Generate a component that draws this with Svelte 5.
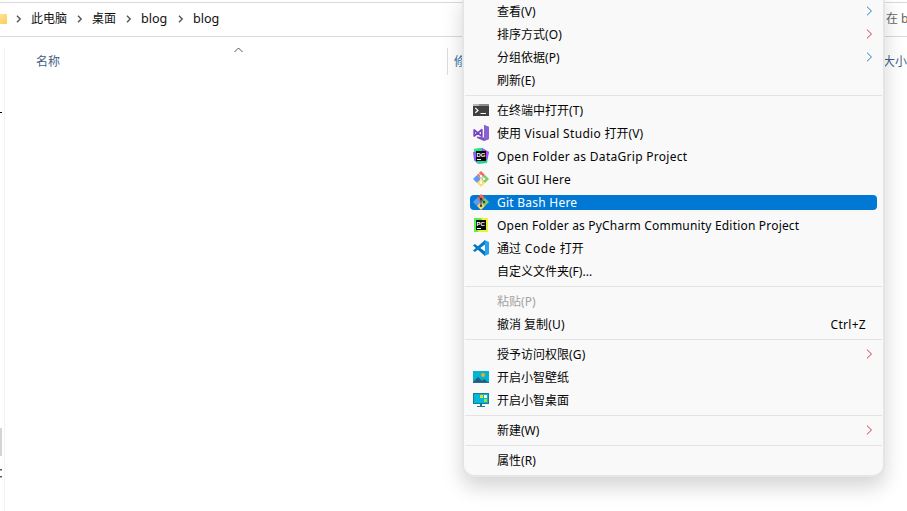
<script>
  const groups = [
    [
      { parts: [['查看'], ['(V)', 0.1]], arrow: 'blue' },
      { parts: [['排序方式'], ['(O)', 0.1]], arrow: 'red' },
      { parts: [['分组依据'], ['(P)', 0.1]], arrow: 'blue' },
      { parts: [['刷新'], ['(E)', 0.1]] }
    ],
    [
      { parts: [['在终端中打开'], ['(T)', 0.1]], icon: 'terminal' },
      { parts: [['使用'], [' Visual Studio ', 0.32], ['打开'], ['(V)', 0.1]], icon: 'vs' },
      { parts: [['Open Folder as DataGrip Project', 0.29]], icon: 'datagrip' },
      { parts: [['Git GUI Here', 0.24]], icon: 'git' },
      { parts: [['Git Bash Here', 0.24]], icon: 'git', selected: true },
      { parts: [['Open Folder as PyCharm Community Edition Project', 0.19]], icon: 'pycharm' },
      { parts: [['通过'], [' Code ', 0.6], ['打开']], icon: 'code' },
      { parts: [['自定义文件夹'], ['(F)...', 0]] }
    ],
    [
      { parts: [['粘贴'], ['(P)', 0.1]], disabled: true },
      { parts: [['撤消 复制'], ['(U)', 0.3]], shortcut: 'Ctrl+Z' }
    ],
    [
      { parts: [['授予访问权限'], ['(G)', 0.2]], arrow: 'red' },
      { parts: [['开启小智壁纸']], icon: 'wallpaper' },
      { parts: [['开启小智桌面']], icon: 'desktop' }
    ],
    [{ parts: [['新建'], ['(W)', 0]], arrow: 'red' }],
    [{ parts: [['属性'], ['(R)', 0.1]] }]
  ];
  const crumbs = ['此电脑', '桌面', 'blog', 'blog'];
</script>

<div class="window">
  <header class="address">
    <i class="folder"></i>
    {#each crumbs as crumb, i}
      <svg class="sep" width="6" height="8" viewBox="0 0 6 8"><path d="M1 .8 4.2 4 1 7.2" fill="none" stroke="#555" stroke-width="1.4" /></svg>
      <span class="crumb c{i}">{crumb}</span>
    {/each}
    <span class="search">在 b</span>
  </header>
  <main>
    <aside>
      <i class="dash"></i>
      <i class="thumb"></i>
      <span class="bits"><i></i><i></i></span>
    </aside>
    <section>
      <div class="columns">
        <div class="name">名称
          <svg class="sort" width="9" height="6" viewBox="0 0 9 6"><path d="M.5 5 4.5 1 8.5 5" fill="none" stroke="#555" /></svg>
        </div>
        <div class="date">修</div>
        <div class="size">大小</div>
      </div>
    </section>
  </main>

  <nav class="menu">
    {#each groups as group, g}
      {#if g}<hr />{/if}
      {#each group as item}
        <div class="row" class:selected={item.selected} class:disabled={item.disabled}>
          <span class="icon">
            {#if item.icon === 'terminal'}
              <svg viewBox="0 0 16 16"><path d="M0 2h16v12H0z" fill="#414141" /><path d="M0 2h16v2H0z" fill="#8c8c8c" /><path d="M0 2h6v2H0z" fill="#b8b8b8" /><path d="m2.3 6 2.7 2.4-2.7 2.4M7.5 11.5H13" fill="none" stroke="#fff" stroke-width="1.2" /></svg>
            {:else if item.icon === 'vs'}
              <svg viewBox="0 0 16 16"><path d="m11 0 5 2v12l-5 2-7-3v-1.4l7 1z" fill="#7b4fc4" /><path d="m11 0 5 2v12l-5 2z" fill="#8962d2" /><path d="M1.2 5v6L8.8 4.7v6.6L1.2 5z" fill="none" stroke="#7543bf" stroke-width="1.7" stroke-linejoin="round" /></svg>
            {:else if item.icon === 'datagrip'}
              <svg viewBox="0 0 16 16"><path d="m1 1 8-1 7 4-2 11-9 1-4-4z" fill="#20d6a0" /><path d="m9 0 7 4-2 8-6-3z" fill="#a64bf5" /><path d="m0 4 4-1v12l-3-3z" fill="#8c5cf1" /><path d="m1 1 8-1-4 4H1z" fill="#1ce883" /><path d="M3 3h10v10H3z" fill="#070707" /><text x="3.4" y="8.5" class="badge">DG</text><path d="M4 11h4v1H4z" fill="#fff" /></svg>
            {:else if item.icon === 'git'}
              <svg viewBox="0 0 16 16"><path d="m8 0 4 4-4 4-4-4z" fill="#f06b60" /><path d="m4 4 4 4-4 4-4-4z" fill="#6499ef" /><path d="m12 4 4 4-4 4-4-4z" fill="#80cc69" /><path d="m8 8 4 4-4 4-4-4z" fill="#ffda65" />
                <g class="branch"><path d="m5.5 2.2 5.2 5.3M8 4.7v7" /><path d="M7.3 4.3h1.4v1.4H7.3zM7.3 11h1.4v1.4H7.3zM10.3 7.3h1.4v1.4h-1.4z" /></g>
              </svg>
            {:else if item.icon === 'pycharm'}
              <svg viewBox="0 0 16 16"><path d="M1 1h14v14H1z" fill="#e6f532" /><path d="M1 1h8L5 15H1z" fill="#63ed4c" /><path d="M8 1h7v5z" fill="#ffed35" /><path d="M3 3h10v10H3z" fill="#080b05" /><text x="3.6" y="8.5" class="badge">PC</text><path d="M4 11h4v1H4z" fill="#fff" /></svg>
            {:else if item.icon === 'code'}
              <svg viewBox="0 0 16 16"><path d="m0 5.5 1.8-1.4L12 11.5V16z" fill="#0872b9" /><path d="m0 10.5 1.8 1.4L12 4.5V0z" fill="#087dc7" /><path d="m11.5 0 4.5 2v12l-4.5 2-.8-.8c.8.2 1.3-.2 1.3-1V1.8c0-.8-.5-1.2-1.3-1z" fill="#24a3ed" /></svg>
            {:else if item.icon === 'wallpaper'}
              <svg viewBox="0 0 16 16"><path d="M0 2h16v12H0z" fill="#00b4d2" /><path d="m0 13 5-5 4 4 2-2 5 4H0z" fill="#245b82" /><circle cx="10" cy="6" r="2" fill="#f3ac16" /><path d="M0 13h16v1H0z" fill="#246e91" /></svg>
            {:else if item.icon === 'desktop'}
              <svg viewBox="0 0 16 16"><path d="M0 1h16v11H0z" fill="#187b9c" /><path d="M1 2h14v9H1z" fill="#00b8d7" /><path d="M7 3h3v3H7z" fill="#ffd51a" /><path d="M11 3h3v3h-3z" fill="#fff" /><path d="M11 7h3v3h-3z" fill="#a7df21" /><path d="M7 12h2v2h3v1H4v-1h3z" fill="#187b9c" /></svg>
            {/if}
          </span>
          <span class="label">{#each item.parts as [text, spacing]}<span style:letter-spacing="{spacing ?? 0}px">{text}</span>{/each}</span>
          {#if item.shortcut}<span class="shortcut">{item.shortcut}</span>{/if}
          {#if item.arrow}
            <svg class="arrow {item.arrow}" width="7" height="10" viewBox="0 0 7 10"><path d="m1 .7 4.5 4.3L1 9.3" fill="none" stroke="currentColor" /></svg>
          {/if}
        </div>
      {/each}
    {/each}
  </nav>
</div>

<style>
  :global(body) { background: #fff; }
  .window { position: relative; display: flex; flex-direction: column; width: 907px; height: 511px; overflow: hidden; background: #fff; color: #111; font: 12px/23px "Noto Sans", "Noto Sans CJK SC", sans-serif; white-space: nowrap; }
  .address { box-sizing: border-box; display: flex; align-items: center; flex: none; height: 35px; margin-top: 2px; padding-bottom: 2px; border: solid #d9d9d9; border-width: 1px 0; }
  .folder { width: 7px; height: 10px; flex: none; border-radius: 0 1px 1px 0; background: linear-gradient(135deg, #ffe397, #ffcc51); }
  .sep { flex: none; margin: 0 9px 0 9px; }
  .crumb { flex: none; width: 36px; }
  .c0 { width: 37px; }
  .c1 { width: 25px; }
  .c2, .c3 { width: 28px; font-size: 12.6px; }
  .search { margin-left: auto; width: 21px; white-space: pre; color: #666; }
  main { display: flex; flex: 1; min-height: 0; padding-top: 11px; }
  aside { box-sizing: border-box; display: flex; flex-direction: column; width: 5px; border-right: 1px solid #f2f2f2; }
  .dash { width: 2px; height: 1px; margin-top: 64px; background: #000; }
  .thumb { width: 2px; height: 28px; margin-top: 315px; background: #d5d5d5; }
  .bits { display: flex; flex-direction: column; gap: 5px; margin-top: 13px; }
  .bits i { width: 2px; height: 2px; background: linear-gradient(#26649c 50%, #eda354 50%); }
  section { flex: 1; }
  .columns { display: flex; height: 27px; line-height: 27px; color: #455e87; }
  .name { position: relative; box-sizing: border-box; width: 443px; padding-left: 31px; border-right: 1px solid #dedede; }
  .sort { position: absolute; left: 229px; top: -1px; }
  .date { box-sizing: border-box; width: 435px; padding-left: 6px; color: #2873ad; }
  .size { width: 24px; }
  .menu { position: absolute; left: 462px; top: -10px; box-sizing: border-box; width: 423px; height: 487px; padding-top: 8px; border: 2px solid #e5e5e5; border-radius: 12px; background: #f9f9f9; box-shadow: 0 10px 20px rgba(0, 0, 0, .17); color: #050505; }
  .row { display: flex; align-items: center; height: 23px; margin: 0 6px; }
  .icon { display: flex; flex: none; width: 16px; height: 16px; margin: -1px 8px 0 3px; }
  .icon svg { width: 16px; height: 16px; }
  .badge { font: bold 6px "Liberation Sans", sans-serif; fill: #fff; }
  .branch { fill: #fff; stroke: #fff; stroke-width: .9; }
  .selected .branch { fill: #26384a; stroke: #26384a; }
  .label { flex: 1; white-space: pre; }
  .disabled { color: #a3a3a3; }
  .selected { height: 15px; margin-block: 4px; border-radius: 4px; background: #0078d4; color: #fff; }
  .shortcut { margin-right: 11px; letter-spacing: .3px; }
  .arrow { margin: -2px 4px 0 0; }
  .blue { color: #2087ba; }
  .red { color: #b9454a; }
  hr { height: 1px; margin: 3px 1px; border: 0; background: #e3e3e3; }
</style>
